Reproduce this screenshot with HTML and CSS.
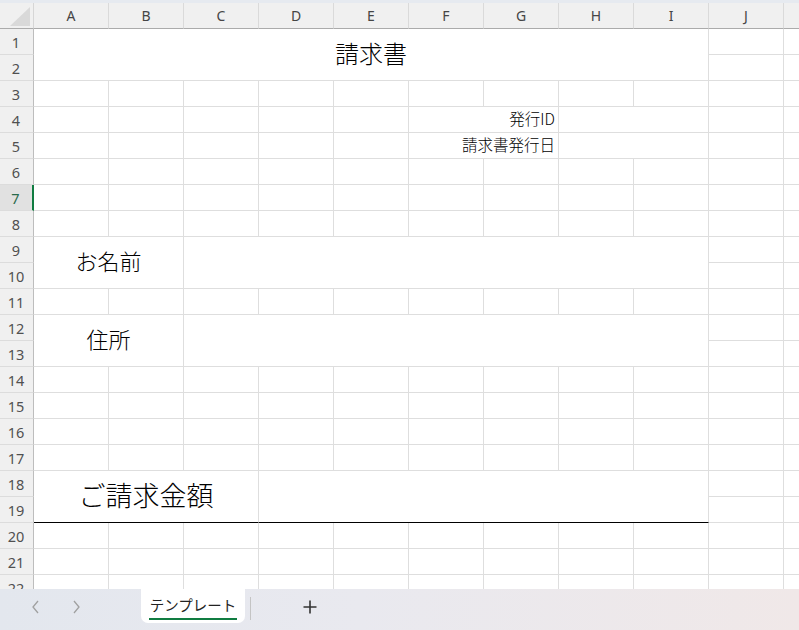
FILE: index.html
```html
<!DOCTYPE html>
<html lang="ja">
<head>
<meta charset="utf-8">
<title>請求書</title>
<link rel="stylesheet" href="styles.css">
</head>
<body>
<div class="topstrip"></div>
<div class="sheet">
  <div class="grid">
    <div class="corner"><svg class="tri" width="33" height="25" viewBox="0 0 33 25"><polygon points="10,23 30,23 30,4" fill="#d9d9d9"/></svg></div>
    <div class="ch">A</div><div class="ch">B</div><div class="ch">C</div><div class="ch">D</div><div class="ch">E</div><div class="ch">F</div><div class="ch">G</div><div class="ch">H</div><div class="ch">I</div><div class="ch">J</div><div class="ch"></div>

    <div class="rh">1</div><div class="c m-c9 m-r2 title">請求書</div><div class="c"></div><div class="c"></div>
    <div class="rh">2</div><div class="c"></div><div class="c"></div>

    <div class="rh">3</div><div class="c"></div><div class="c"></div><div class="c"></div><div class="c"></div><div class="c"></div><div class="c"></div><div class="c"></div><div class="c"></div><div class="c"></div><div class="c"></div><div class="c"></div>

    <div class="rh">4</div><div class="c"></div><div class="c"></div><div class="c"></div><div class="c"></div><div class="c"></div><div class="c m-c2 label">発行ID</div><div class="c m-c2"></div><div class="c"></div><div class="c"></div>
    <div class="rh">5</div><div class="c"></div><div class="c"></div><div class="c"></div><div class="c"></div><div class="c"></div><div class="c m-c2 label">請求書発行日</div><div class="c m-c2"></div><div class="c"></div><div class="c"></div>

    <div class="rh">6</div><div class="c"></div><div class="c"></div><div class="c"></div><div class="c"></div><div class="c"></div><div class="c"></div><div class="c"></div><div class="c"></div><div class="c"></div><div class="c"></div><div class="c"></div>
    <div class="rh rh-sel">7</div><div class="c"></div><div class="c"></div><div class="c"></div><div class="c"></div><div class="c"></div><div class="c"></div><div class="c"></div><div class="c"></div><div class="c"></div><div class="c"></div><div class="c"></div>
    <div class="rh">8</div><div class="c"></div><div class="c"></div><div class="c"></div><div class="c"></div><div class="c"></div><div class="c"></div><div class="c"></div><div class="c"></div><div class="c"></div><div class="c"></div><div class="c"></div>

    <div class="rh">9</div><div class="c m-c2 m-r2 field">お名前</div><div class="c m-c7 m-r2"></div><div class="c"></div><div class="c"></div>
    <div class="rh">10</div><div class="c"></div><div class="c"></div>

    <div class="rh">11</div><div class="c"></div><div class="c"></div><div class="c"></div><div class="c"></div><div class="c"></div><div class="c"></div><div class="c"></div><div class="c"></div><div class="c"></div><div class="c"></div><div class="c"></div>

    <div class="rh">12</div><div class="c m-c2 m-r2 field">住所</div><div class="c m-c7 m-r2"></div><div class="c"></div><div class="c"></div>
    <div class="rh">13</div><div class="c"></div><div class="c"></div>

    <div class="rh">14</div><div class="c"></div><div class="c"></div><div class="c"></div><div class="c"></div><div class="c"></div><div class="c"></div><div class="c"></div><div class="c"></div><div class="c"></div><div class="c"></div><div class="c"></div>
    <div class="rh">15</div><div class="c"></div><div class="c"></div><div class="c"></div><div class="c"></div><div class="c"></div><div class="c"></div><div class="c"></div><div class="c"></div><div class="c"></div><div class="c"></div><div class="c"></div>
    <div class="rh">16</div><div class="c"></div><div class="c"></div><div class="c"></div><div class="c"></div><div class="c"></div><div class="c"></div><div class="c"></div><div class="c"></div><div class="c"></div><div class="c"></div><div class="c"></div>
    <div class="rh">17</div><div class="c"></div><div class="c"></div><div class="c"></div><div class="c"></div><div class="c"></div><div class="c"></div><div class="c"></div><div class="c"></div><div class="c"></div><div class="c"></div><div class="c"></div>

    <div class="rh">18</div><div class="c m-c3 m-r2 total">ご請求金額</div><div class="c m-c6 m-r2 total-val"></div><div class="c"></div><div class="c"></div>
    <div class="rh">19</div><div class="c"></div><div class="c"></div>

    <div class="rh">20</div><div class="c"></div><div class="c"></div><div class="c"></div><div class="c"></div><div class="c"></div><div class="c"></div><div class="c"></div><div class="c"></div><div class="c"></div><div class="c"></div><div class="c"></div>
    <div class="rh">21</div><div class="c"></div><div class="c"></div><div class="c"></div><div class="c"></div><div class="c"></div><div class="c"></div><div class="c"></div><div class="c"></div><div class="c"></div><div class="c"></div><div class="c"></div>
    <div class="rh">22</div><div class="c"></div><div class="c"></div><div class="c"></div><div class="c"></div><div class="c"></div><div class="c"></div><div class="c"></div><div class="c"></div><div class="c"></div><div class="c"></div><div class="c"></div>
  </div>
</div>
<div class="tabbar">
  <div class="nav">
    <span class="arrow"><svg width="16" height="16" viewBox="0 0 16 16"><polyline points="10,2 5,8 10,14" fill="none" stroke="#a0a0a0" stroke-width="1.3"/></svg></span>
    <span class="arrow"><svg width="16" height="16" viewBox="0 0 16 16"><polyline points="6,2 11,8 6,14" fill="none" stroke="#a0a0a0" stroke-width="1.3"/></svg></span>
  </div>
  <div class="tab"><span class="tab-label">テンプレート</span></div>
  <div class="sep"></div>
  <div class="add"><svg width="16" height="16" viewBox="0 0 16 16"><path d="M8 1.5V14.5M1.5 8H14.5" stroke="#333" stroke-width="1.6" fill="none"/></svg></div>
</div>
</body>
</html>
```
FILE: styles.css
```css
* { box-sizing: border-box; }
html, body { margin: 0; padding: 0; }
body {
  width: 799px;
  height: 630px;
  overflow: hidden;
  background: #ffffff;
  font-family: "Noto Sans", "Noto Sans CJK JP", sans-serif;
  display: flex;
  flex-direction: column;
}
.topstrip { height: 3px; flex: none; background: #e6eaf0; }
.sheet { height: 586px; flex: none; overflow: hidden; }
.grid {
  display: grid;
  grid-template-columns: 34px repeat(11, 75px);
  grid-auto-rows: 26px;
  width: max-content;
}
.corner {
  background: #f0f0f0;
  border-right: 1px solid #d6d6d6;
  border-bottom: 1px solid #ababab;
}
.tri { display: block; }
.ch {
  background: #f0f0f0;
  border-right: 1px solid #dadada;
  border-bottom: 1px solid #ababab;
  display: flex;
  align-items: center;
  justify-content: center;
  font-size: 14px;
  color: #454545;
}
.rh {
  background: #f0f0f0;
  border-right: 1px solid #bdbdbd;
  border-bottom: 1px solid #dcdcdc;
  display: flex;
  align-items: center;
  justify-content: center;
  font-size: 14.5px;
  color: #505050;
  padding-right: 1px;
}
.rh-sel {
  background: #e1e1e1;
  border-right: 2px solid #107c41;
  color: #2a6b4c;
}
.c {
  background: #ffffff;
  border-right: 1px solid #dedede;
  border-bottom: 1px solid #dedede;
  font-family: "Noto Sans CJK JP", sans-serif;
  font-weight: 300;
  color: #000;
  display: flex;
  align-items: center;
  justify-content: center;
  white-space: nowrap;
}
.m-c2 { grid-column: span 2; }
.m-c3 { grid-column: span 3; }
.m-c6 { grid-column: span 6; }
.m-c7 { grid-column: span 7; }
.m-c9 { grid-column: span 9; }
.m-r2 { grid-row: span 2; }
.title { font-size: 24px; padding-bottom: 5px; }
.label { justify-content: flex-end; padding-right: 3px; font-size: 15.5px; padding-bottom: 3px; }
.field { font-size: 22px; padding-bottom: 5px; }
.total { font-size: 27px; border-bottom-color: #000; padding-bottom: 4px; }
.total-val { border-bottom-color: #000; }

.tabbar {
  height: 41px;
  flex: none;
  display: flex;
  align-items: flex-start;
  background: linear-gradient(90deg, #e3e7ee 0%, #e9e9ef 45%, #f0e8e8 100%);
}
.nav {
  width: 141px;
  display: flex;
  gap: 24px;
  padding-left: 28px;
  padding-top: 10px;
}
.arrow { display: block; width: 16px; height: 16px; }
.arrow svg { display: block; }
.tab {
  width: 104px;
  height: 34px;
  background: #ffffff;
  border-radius: 0 0 7px 7px;
  display: flex;
  justify-content: center;
  padding-top: 5px;
}
.tab-label {
  font-family: "Noto Sans CJK JP", sans-serif;
  font-size: 14.5px;
  line-height: 22px;
  color: #222;
  padding: 0 1px 2px;
  border-bottom: 2px solid #107c41;
  height: 26px;
}
.sep {
  width: 1px;
  height: 23px;
  margin-left: 5px;
  margin-top: 8px;
  background: #c4c4c4;
}
.add { margin-left: 51px; margin-top: 10px; width: 16px; height: 16px; }
.add svg { display: block; }
```
